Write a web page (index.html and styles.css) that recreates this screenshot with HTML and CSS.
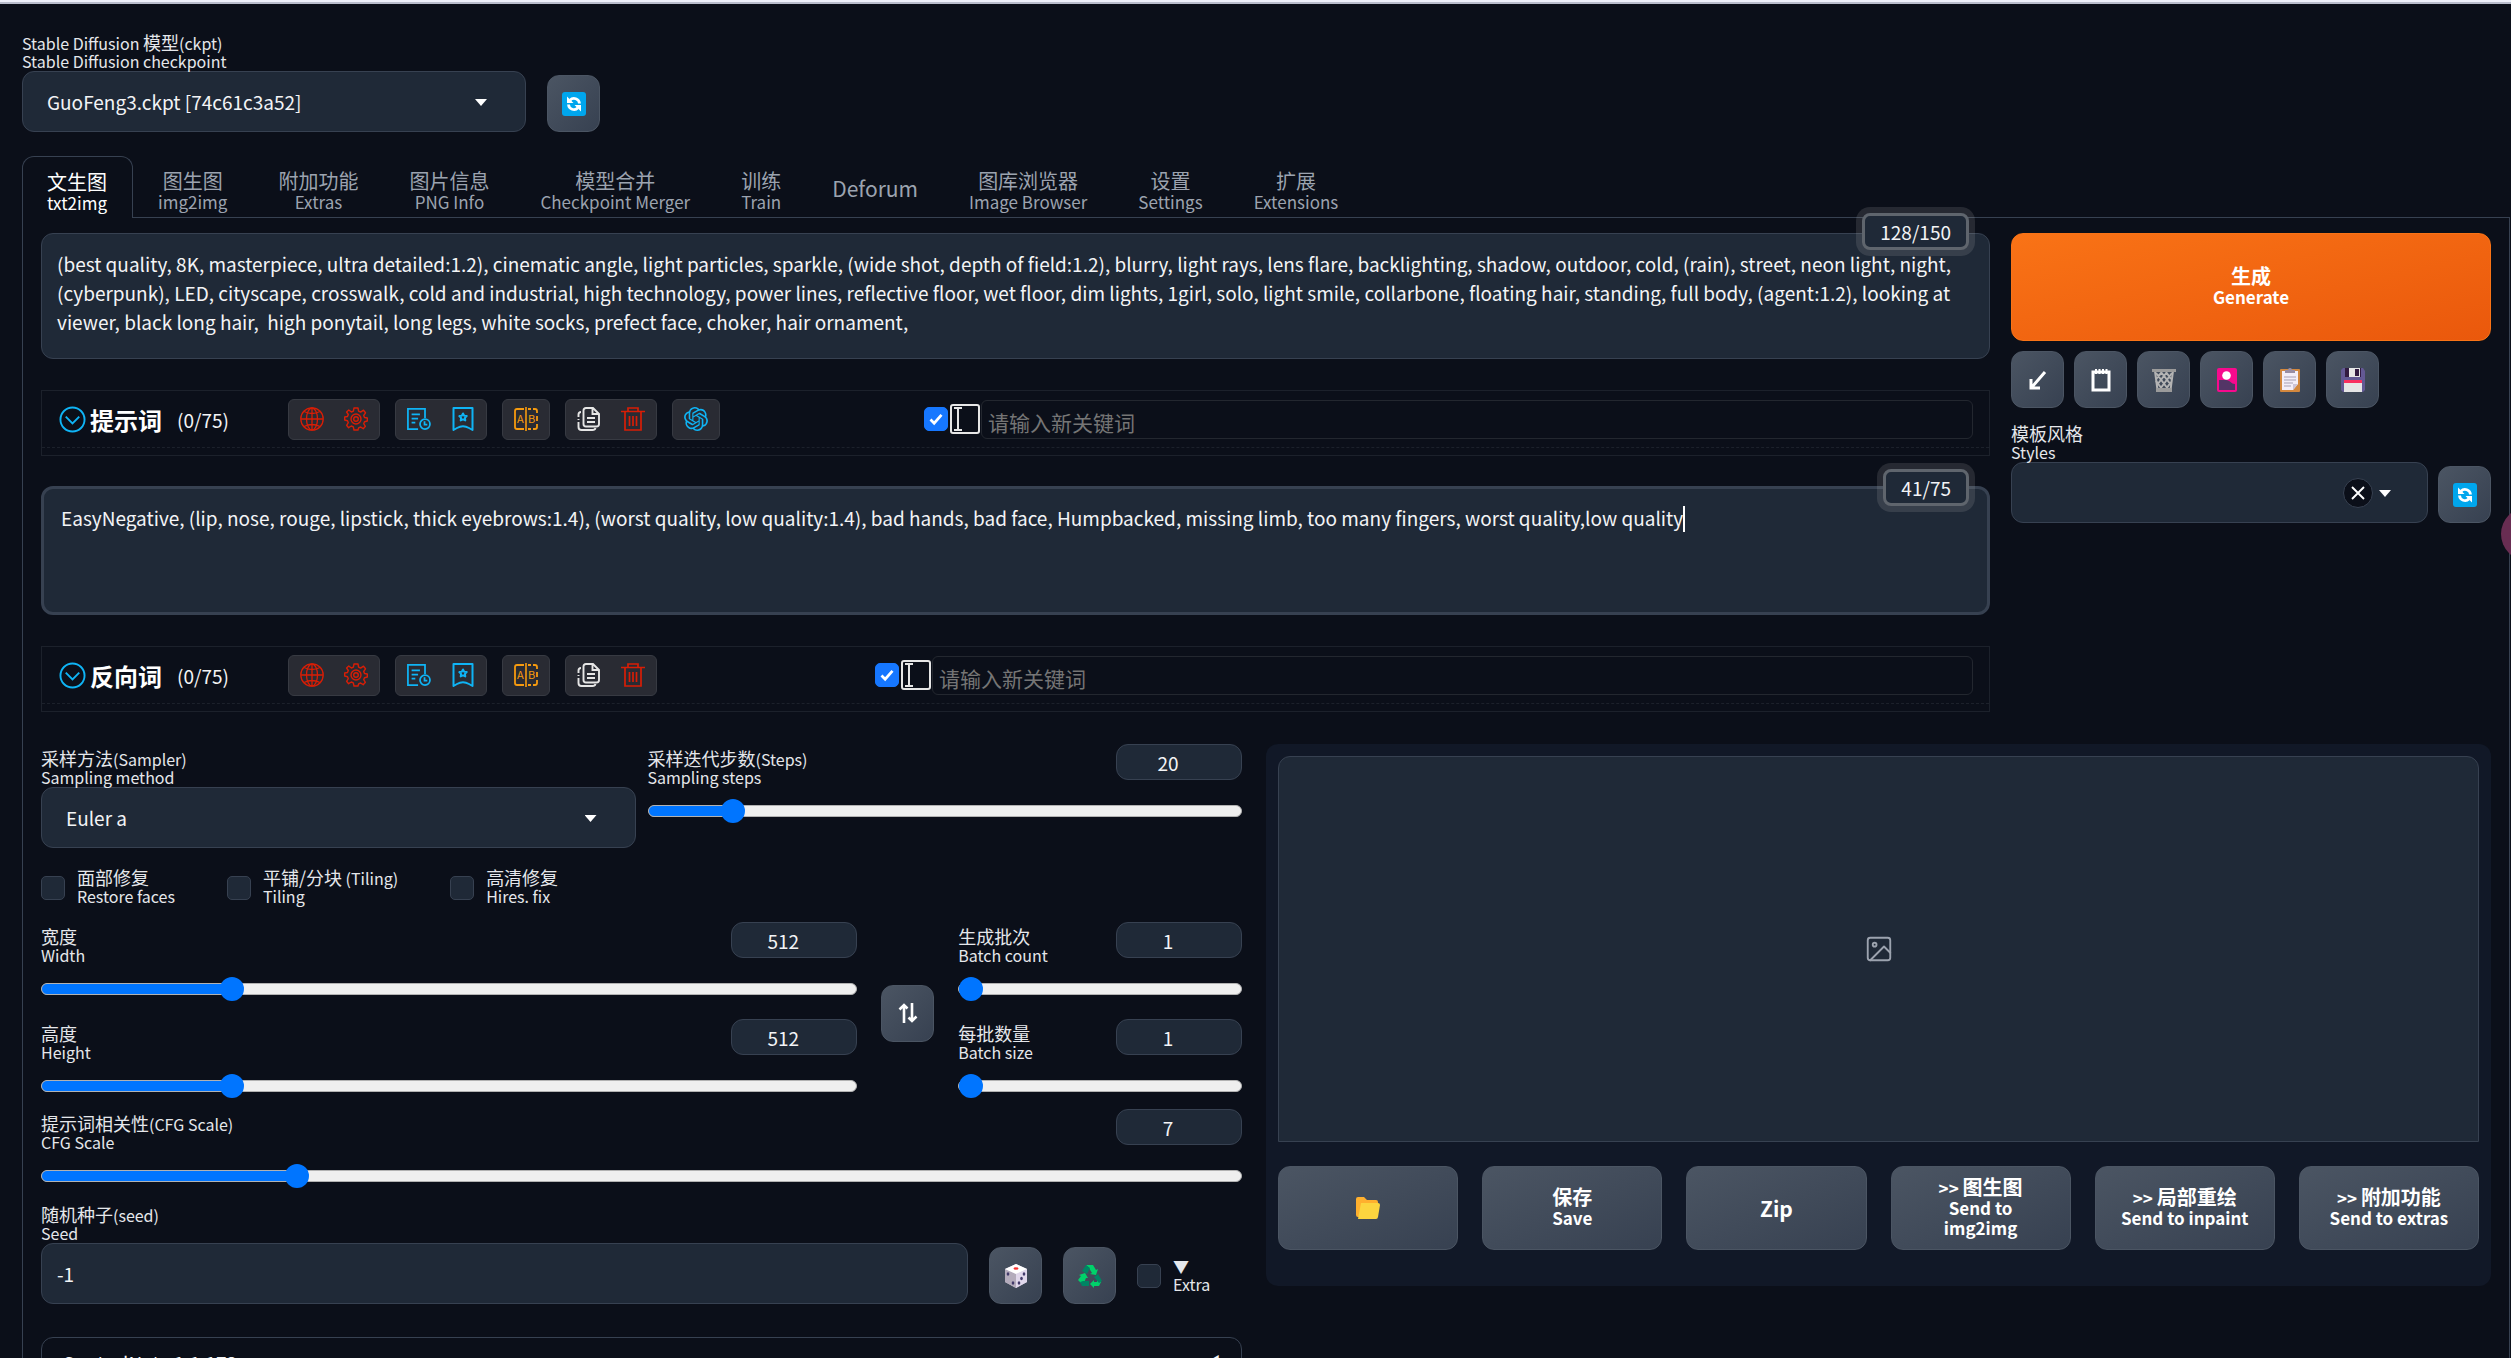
FILE: index.html
```html
<!DOCTYPE html>
<html lang="zh-CN">
<head>
<meta charset="utf-8">
<title>Stable Diffusion</title>
<link rel="stylesheet" href="styles.css">
</head>
<body>
<svg class="sprite" aria-hidden="true">
  <symbol id="i-refresh" viewBox="0 0 24 24"><rect width="24" height="24" rx="3" fill="#00a6ed"/><path d="M8 8.200a5.500 5.500 0 0 1 9.500 3.300M16 15.800a5.500 5.500 0 0 1-9.500-3.300" fill="none" stroke="#fff" stroke-width="2.800"/><path d="M5 4.500V11h6.500zM19 19.500V13h-6.500z" fill="#fff"/></symbol>
  <symbol id="i-arrow" viewBox="0 0 24 24"><path d="M19 4 6 19M5 11v9h9" fill="none" stroke="#fff" stroke-width="3"/></symbol>
  <symbol id="i-pad" viewBox="0 0 24 24"><path d="M4 4h16v18H4z" fill="none" stroke="#fff" stroke-width="3"/><path d="M7 1v5M10.500 1v5M14 1v5M17.500 1v5" stroke="#fff" stroke-width="2"/></symbol>
  <symbol id="i-bin" viewBox="0 0 24 24"><path d="M3 3l2.500 19h13L21 3z" fill="none" stroke="#b4b4b4" stroke-width="2"/><path d="M4 5l12 16M9 4l10 13M14 4l5 7M20 5 8 21M15 4 5 17M10 4 4 11M4 13l6 8M19 14l-5 7" stroke="#b4b4b4" stroke-width="2"/><path d="M0 1h24v3H0zM4 20h16v4H4z" fill="#9b9b9b"/></symbol>
  <symbol id="i-card" viewBox="0 0 24 24"><rect x="2" width="20" height="24" rx="2" fill="#f70a8d"/><rect x="4" y="2" width="16" height="20" fill="#533566"/><path d="M4 2h16v14c-4 0-5-4-9-4H4z" fill="#f70a8d"/><circle cx="11.500" cy="7.500" r="4.300" fill="#fff"/></symbol>
  <symbol id="i-clip" viewBox="0 0 24 24"><rect x="2" y="1" width="20" height="23" rx="1" fill="#d3883e"/><path d="M4 3h16v13l-5 6H4z" fill="#f3eef8"/><path d="M20 16h-5v6z" fill="#cdc4d6"/><path d="M6 9h12M6 12h12M6 15h9M6 18h7" stroke="#a79fb3" stroke-width="1"/><path d="M7 2h3a2 2 0 0 1 4 0h3v3H7z" fill="#998ea4"/></symbol>
  <symbol id="i-floppy" viewBox="0 0 24 24"><path d="M2 0h20l2 3v19l-2 2H2l-2-2V2z" fill="#635994"/><path d="M4 0h16v9H4z" fill="#321b41"/><path d="M8 0h11v9H8z" fill="#e6e6e6"/><path d="M14 1h4v7h-4z" fill="#321b41"/><path d="M3 12h18v12H3z" fill="#e6e6e6"/><path d="M3 12h18v3H3z" fill="#f92f60"/></symbol>
  <symbol id="i-folder" viewBox="0 0 24 24"><path d="M0 3q0-2 2-2h6l3 3h9q2 0 2 2v15H2q-2 0-2-2z" fill="#ffb02e"/><path d="M5 7h17q2 0 2 2l-2 12q-.3 2-2 2H2z" fill="#fcd53f"/></symbol>
  <symbol id="i-dice" viewBox="0 0 24 24"><path d="M12 0 1 5v13l11 6 11-6V5z" fill="#cdc4d6"/><path d="M12 10 1 5v13l11 6z" fill="#b4acbc"/><path d="M12 10 23 5v13l-11 6z" fill="#e1d8ec"/><path d="M12 0 1 5l11 5 11-5z" fill="#fff"/><ellipse cx="12" cy="4.500" rx="2.500" ry="1.200" fill="#f8312f"/><g fill="#433b6b"><ellipse cx="4" cy="10" rx="1.300" ry="1.700"/><ellipse cx="9" cy="19" rx="1.300" ry="1.700"/><ellipse cx="20" cy="10" rx="1.300" ry="1.700"/><ellipse cx="17.500" cy="14.500" rx="1.300" ry="1.700"/><ellipse cx="15" cy="19" rx="1.300" ry="1.700"/></g></symbol>
  <symbol id="i-recycle" viewBox="0 0 24 24"><path d="M8 1h7l3 5 2-1-2 6-6-1 2-1-3-5z" fill="#00d26a"/><path d="M8 1l4 3-3 6-5-3z" fill="#008463"/><path d="M1 11l6-2 3 5-2 0-3 7-5-5 3-4z" fill="#00d26a"/><path d="M5 17h6v5H4l-2-4z" fill="#008463"/><path d="M19 11l4 7-2 4h-5v2l-4-4 4-4v2h3z" fill="#00d26a"/><path d="M16 13l4-3 4 7-3 2z" fill="#008463"/></symbol>
  <symbol id="i-swap" viewBox="0 0 24 24"><path d="M8 22V4M3.500 8.500 8 4l3.500 3.500M16 2v18M12.500 16.500 16 20l4.500-4.500" fill="none" stroke="#fff" stroke-width="2.600"/></symbol>
  <symbol id="i-chev" viewBox="0 0 28 28"><g fill="none" stroke="#0fb4f5" stroke-width="2"><circle cx="14" cy="14" r="12.500"/><path d="m7 11 7 7 7-7"/></g></symbol>
  <symbol id="i-globe" viewBox="0 0 24 24"><g fill="none" stroke="#d81e06" stroke-width="1.300"><circle cx="12" cy="12" r="11.200"/><ellipse cx="12" cy="12" rx="5.500" ry="11"/><path d="M12 1v22M1 12h22M4 4.500q8 4 16 0M4 19.500q8-4 16 0"/></g></symbol>
  <symbol id="i-gear" viewBox="0 0 24 24"><g fill="none" stroke="#d81e06" stroke-width="1.400" stroke-linejoin="round"><path d="M10 1h4l.6 3.200 2 .9L19.500 3.200l2 2.600-1.800 2.700.8 2 2.800.5v3l-2.800.7-.8 2 1.700 2.600-2.200 2.400-2.600-1.700-2 .9L14 23h-4l-.7-3.100-2-.9-2.700 1.700-2-2.400L4.300 15.700l-.8-2L.7 13v-3l2.800-.5.8-2L2.600 5l2.200-2 2.600 2 2-.9z"/><circle cx="12" cy="12" r="5"/><circle cx="12" cy="12" r="2.300"/></g></symbol>
  <symbol id="i-history" viewBox="0 0 26 24"><g fill="none" stroke="#0fb4f5" stroke-width="1.900"><path d="M12 23H1V1h18.500v10M5 7h9M5 11.500h7M5 16h4"/><circle cx="19.500" cy="17.500" r="5.400"/><path d="M19 14.500V18h3"/></g></symbol>
  <symbol id="i-mark" viewBox="0 0 24 24"><g fill="none" stroke="#0fb4f5" stroke-width="2" stroke-linejoin="round"><path d="M2.500 1h19v22L18 21q-6-3.500-12 0l-3.500 2z"/><path d="m12 6.500 1.200 2.200 2.500.4-1.800 1.800.4 2.500L12 12.300l-2.300 1.100.4-2.500-1.800-1.800 2.500-.4z"/></g></symbol>
  <symbol id="i-ab" viewBox="0 0 24 24"><g fill="none" stroke="#f59a0f" stroke-width="1.800"><path d="M10 2H3Q1 2 1 4v16q0 2 2 2h7M14 2h3M19 2h2q2 0 2 2v2M23 9v5M23 17v3q0 2-2 2h-2M17 22h-3"/><path d="M12 0v24" stroke-width="1.600"/></g><text x="3" y="16" class="ab">A</text><text x="14" y="16" class="ab">B</text></symbol>
  <symbol id="i-copy" viewBox="0 0 24 24"><g fill="none" stroke="#e6e6e6" stroke-width="1.900"><path d="M9 1h7l6 6v10q0 2.500-2.500 2.500H9q-2.500 0-2.500-2.500V3.500Q6.500 1 9 1zM15.500 1v6h6M10 11h8M10 15h8"/><path d="M4 5Q1.500 5 1.500 7.500V10M1.500 12v1M1.500 15v5q0 3 3 3h11q2.500 0 3-2"/></g></symbol>
  <symbol id="i-trash" viewBox="0 0 24 24"><g fill="none" stroke="#d81e06" stroke-width="1.700"><path d="M0 4.500h24M7 4V1h10v3M4 5v18h16V5M8.500 9v10M12 9v10M15.500 9v10"/></g></symbol>
  <symbol id="i-gpt" viewBox="0 0 24 24"><path fill="#0fb4f5" d="M22.2819 9.8211a5.9847 5.9847 0 0 0-.5157-4.9108 6.0462 6.0462 0 0 0-6.5098-2.9A6.0651 6.0651 0 0 0 4.9807 4.1818a5.9847 5.9847 0 0 0-3.9977 2.9 6.0462 6.0462 0 0 0 .7427 7.0966 5.98 5.98 0 0 0 .511 4.9107 6.051 6.051 0 0 0 6.5146 2.9001A5.9847 5.9847 0 0 0 13.2599 24a6.0557 6.0557 0 0 0 5.7718-4.2058 5.9894 5.9894 0 0 0 3.9977-2.9001 6.0557 6.0557 0 0 0-.7475-7.0729zm-9.022 12.6081a4.4755 4.4755 0 0 1-2.8764-1.0408l.1419-.0804 4.7783-2.7582a.7948.7948 0 0 0 .3927-.6813v-6.7369l2.02 1.1686a.071.071 0 0 1 .038.0615v5.5826a4.504 4.504 0 0 1-4.4945 4.4944zm-9.6607-4.1254a4.4708 4.4708 0 0 1-.5346-3.0137l.142.0852 4.783 2.7582a.7712.7712 0 0 0 .7806 0l5.8428-3.3685v2.3324a.0804.0804 0 0 1-.0332.0615L9.74 19.9502a4.4992 4.4992 0 0 1-6.1408-1.6464zM2.3408 7.8956a4.485 4.485 0 0 1 2.3655-1.9728V11.6a.7664.7664 0 0 0 .3879.6765l5.8144 3.3543-2.0201 1.1685a.0757.0757 0 0 1-.071 0l-4.8303-2.7865A4.504 4.504 0 0 1 2.3408 7.872zm16.5963 3.8558L13.1038 8.364 15.1192 7.2a.0757.0757 0 0 1 .071 0l4.8303 2.7913a4.4944 4.4944 0 0 1-.6765 8.1042v-5.6772a.79.79 0 0 0-.407-.667zm2.0107-3.0231l-.142-.0852-4.7735-2.7818a.7759.7759 0 0 0-.7854 0L9.409 9.2297V6.8974a.0662.0662 0 0 1 .0284-.0615l4.8303-2.7866a4.4992 4.4992 0 0 1 6.6802 4.66zM8.3065 12.863l-2.02-1.1638a.0804.0804 0 0 1-.038-.0567V6.0742a4.4992 4.4992 0 0 1 7.3757-3.4537l-.142.0805L8.704 5.459a.7948.7948 0 0 0-.3927.6813zm1.0976-2.3654l2.602-1.4998 2.6069 1.4998v2.9994l-2.5974 1.4997-2.6067-1.4997Z"/></symbol>
  <symbol id="i-ibeam" viewBox="0 0 30 30"><rect x="1" y="1" width="28" height="28" rx="2" fill="none" stroke="#e6e6e6" stroke-width="2"/><path d="M4 4h8M4 26h8M8 4v22" stroke="#e6e6e6" stroke-width="2"/></symbol>
  <symbol id="i-image" viewBox="0 0 24 24"><g fill="none" stroke="#9ca3af" stroke-width="1.500" stroke-linecap="round" stroke-linejoin="round"><rect x="3" y="3" width="18" height="18" rx="2"/><circle cx="8.500" cy="8.500" r="1.500"/><path d="m21 15-5-5L5 21"/></g></symbol>
  <symbol id="i-x" viewBox="0 0 24 24"><path d="m4 4 16 16M20 4 4 20" stroke="#fff" stroke-width="2.500"/></symbol>
</svg>

<div class="window-edge"></div>
<div class="app">
  <header class="quick">
    <div class="field quick-model">
      <label class="label" for="ckpt">Stable Diffusion <span class="zh">模型</span>(ckpt)<br>Stable Diffusion checkpoint</label>
      <div class="select"><select id="ckpt"><option>GuoFeng3.ckpt [74c61c3a52]</option></select></div>
    </div>
    <button class="tool" aria-label="Refresh checkpoints"><svg><use href="#i-refresh"/></svg></button>
  </header>

  <nav class="tabs">
    <button class="tab tab-active"><span class="zh">文生图</span><br>txt2img</button>
    <button class="tab"><span class="zh">图生图</span><br>img2img</button>
    <button class="tab"><span class="zh">附加功能</span><br>Extras</button>
    <button class="tab"><span class="zh">图片信息</span><br>PNG Info</button>
    <button class="tab"><span class="zh">模型合并</span><br>Checkpoint Merger</button>
    <button class="tab"><span class="zh">训练</span><br>Train</button>
    <button class="tab tab-single">Deforum</button>
    <button class="tab"><span class="zh">图库浏览器</span><br>Image Browser</button>
    <button class="tab"><span class="zh">设置</span><br>Settings</button>
    <button class="tab"><span class="zh">扩展</span><br>Extensions</button>
  </nav>

  <main class="panel">
    <section class="top">
      <div class="prompts">
        <div class="prompt">
          <textarea class="prompt-text" aria-label="Prompt" spellcheck="false">(best quality, 8K, masterpiece, ultra detailed:1.2), cinematic angle, light particles, sparkle, (wide shot, depth of field:1.2), blurry, light rays, lens flare, backlighting, shadow, outdoor, cold, (rain), street, neon light, night, (cyberpunk), LED, cityscape, crosswalk, cold and industrial, high technology, power lines, reflective floor, wet floor, dim lights, 1girl, solo, light smile, collarbone, floating hair, standing, full body, (agent:1.2), looking at viewer, black long hair,  high ponytail, long legs, white socks, prefect face, choker, hair ornament,</textarea>
          <span class="tokens">128/150</span>
        </div>
        <div class="bar">
          <div class="bar-row">
            <div class="bar-head"><svg class="chev"><use href="#i-chev"/></svg><b>提示词</b><span>(0/75)</span></div>
            <div class="bar-tools">
              <div class="group"><button aria-label="Language"><svg><use href="#i-globe"/></svg></button><button aria-label="Settings"><svg><use href="#i-gear"/></svg></button></div>
              <div class="group"><button aria-label="History"><svg><use href="#i-history"/></svg></button><button aria-label="Favorites"><svg><use href="#i-mark"/></svg></button></div>
              <div class="group"><button aria-label="Translate"><svg><use href="#i-ab"/></svg></button></div>
              <div class="group"><button aria-label="Copy"><svg><use href="#i-copy"/></svg></button><button aria-label="Delete"><svg><use href="#i-trash"/></svg></button></div>
              <div class="group"><button aria-label="ChatGPT"><svg><use href="#i-gpt"/></svg></button></div>
            </div>
            <div class="keyword">
              <input class="check" type="checkbox" checked aria-label="Show input">
              <svg class="ibeam"><use href="#i-ibeam"/></svg>
              <input class="keyword-input" type="text" placeholder="请输入新关键词" aria-label="Keyword">
            </div>
          </div>
        </div>
        <div class="prompt prompt-focus">
          <textarea class="prompt-text" aria-label="Negative prompt" spellcheck="false">EasyNegative, (lip, nose, rouge, lipstick, thick eyebrows:1.4), (worst quality, low quality:1.4), bad hands, bad face, Humpbacked, missing limb, too many fingers, worst quality,low quality</textarea>
          <span class="tokens">41/75</span>
          <span class="caret"></span>
        </div>
        <div class="bar">
          <div class="bar-row">
            <div class="bar-head"><svg class="chev"><use href="#i-chev"/></svg><b>反向词</b><span>(0/75)</span></div>
            <div class="bar-tools">
              <div class="group"><button aria-label="Language"><svg><use href="#i-globe"/></svg></button><button aria-label="Settings"><svg><use href="#i-gear"/></svg></button></div>
              <div class="group"><button aria-label="History"><svg><use href="#i-history"/></svg></button><button aria-label="Favorites"><svg><use href="#i-mark"/></svg></button></div>
              <div class="group"><button aria-label="Translate"><svg><use href="#i-ab"/></svg></button></div>
              <div class="group"><button aria-label="Copy"><svg><use href="#i-copy"/></svg></button><button aria-label="Delete"><svg><use href="#i-trash"/></svg></button></div>
            </div>
            <div class="keyword keyword-wide">
              <input class="check" type="checkbox" checked aria-label="Show input">
              <svg class="ibeam"><use href="#i-ibeam"/></svg>
              <input class="keyword-input" type="text" placeholder="请输入新关键词" aria-label="Negative keyword">
            </div>
          </div>
        </div>
      </div>

      <aside class="actions">
        <button class="generate"><span class="zh">生成</span><br>Generate</button>
        <div class="tool-row">
          <button class="tool" aria-label="Read parameters"><svg><use href="#i-arrow"/></svg></button>
          <button class="tool" aria-label="Notepad"><svg><use href="#i-pad"/></svg></button>
          <button class="tool" aria-label="Clear prompt"><svg><use href="#i-bin"/></svg></button>
          <button class="tool" aria-label="Extra networks"><svg><use href="#i-card"/></svg></button>
          <button class="tool" aria-label="Apply styles"><svg><use href="#i-clip"/></svg></button>
          <button class="tool" aria-label="Save style"><svg><use href="#i-floppy"/></svg></button>
        </div>
        <div class="styles">
          <div class="field">
            <label class="label" for="styles"><span class="zh">模板风格</span><br>Styles</label>
            <div class="select select-near"><select id="styles"><option></option></select><button class="clear" aria-label="Clear styles"><svg><use href="#i-x"/></svg></button></div>
          </div>
          <button class="tool" aria-label="Refresh styles"><svg><use href="#i-refresh"/></svg></button>
        </div>
      </aside>
    </section>

    <section class="bottom">
      <div class="settings">
        <div class="sampler">
          <div class="field sampler-method">
            <label class="label" for="sampler"><span class="zh">采样方法</span>(Sampler)<br>Sampling method</label>
            <div class="select"><select id="sampler"><option>Euler a</option></select></div>
          </div>
          <div class="slider">
            <div class="slider-head"><label class="label" for="steps"><span class="zh">采样迭代步数</span>(Steps)<br>Sampling steps</label><input class="num" type="number" value="20" aria-label="Sampling steps value"></div>
            <input class="range" id="steps" type="range" min="1" max="150" value="20" style="--p:.1275">
          </div>
        </div>

        <div class="checks">
          <label class="tick"><input class="check" type="checkbox"><span class="label"><span class="zh">面部修复</span><br>Restore faces</span></label>
          <label class="tick"><input class="check" type="checkbox"><span class="label"><span class="zh">平铺/分块</span> (Tiling)<br>Tiling</span></label>
          <label class="tick"><input class="check" type="checkbox"><span class="label"><span class="zh">高清修复</span><br>Hires. fix</span></label>
        </div>

        <div class="size">
          <div class="size-col">
            <div class="slider">
              <div class="slider-head"><label class="label" for="width"><span class="zh">宽度</span><br>Width</label><input class="num" type="number" value="512" aria-label="Width value"></div>
              <input class="range" id="width" type="range" min="64" max="2048" value="512" style="--p:.2258">
            </div>
            <div class="slider">
              <div class="slider-head"><label class="label" for="height"><span class="zh">高度</span><br>Height</label><input class="num" type="number" value="512" aria-label="Height value"></div>
              <input class="range" id="height" type="range" min="64" max="2048" value="512" style="--p:.2258">
            </div>
          </div>
          <button class="tool swap" aria-label="Swap width and height"><svg><use href="#i-swap"/></svg></button>
          <div class="size-col">
            <div class="slider">
              <div class="slider-head"><label class="label" for="count"><span class="zh">生成批次</span><br>Batch count</label><input class="num" type="number" value="1" aria-label="Batch count value"></div>
              <input class="range" id="count" type="range" min="1" max="100" value="1" style="--p:0">
            </div>
            <div class="slider">
              <div class="slider-head"><label class="label" for="batch"><span class="zh">每批数量</span><br>Batch size</label><input class="num" type="number" value="1" aria-label="Batch size value"></div>
              <input class="range" id="batch" type="range" min="1" max="8" value="1" style="--p:0">
            </div>
          </div>
        </div>

        <div class="slider cfg">
          <div class="slider-head"><label class="label" for="cfg"><span class="zh">提示词相关性</span>(CFG Scale)<br>CFG Scale</label><input class="num" type="number" value="7" aria-label="CFG value"></div>
          <input class="range" id="cfg" type="range" min="1" max="30" value="7" style="--p:.2069">
        </div>

        <div class="seed">
          <div class="field">
            <label class="label" for="seed"><span class="zh">随机种子</span>(seed)<br>Seed</label>
            <input class="text" id="seed" type="text" value="-1">
          </div>
          <button class="tool" aria-label="Random seed"><svg><use href="#i-dice"/></svg></button>
          <button class="tool" aria-label="Reuse seed"><svg><use href="#i-recycle"/></svg></button>
          <label class="tick"><input class="check" type="checkbox"><span class="label">▼<br>Extra</span></label>
        </div>

        <button class="accordion"><span>ControlNet v1.1.173</span><span>◀</span></button>
      </div>

      <div class="output">
        <div class="gallery"><svg><use href="#i-image"/></svg></div>
        <div class="sends">
          <button class="send" aria-label="Open folder"><svg><use href="#i-folder"/></svg></button>
          <button class="send"><span><span class="zh">保存</span><br>Save</span></button>
          <button class="send send-single">Zip</button>
          <button class="send"><span>&gt;&gt; <span class="zh">图生图</span><br>Send to<br>img2img</span></button>
          <button class="send"><span>&gt;&gt; <span class="zh">局部重绘</span><br>Send to inpaint</span></button>
          <button class="send"><span>&gt;&gt; <span class="zh">附加功能</span><br>Send to extras</span></button>
        </div>
      </div>
    </section>
  </main>
  <span class="bubble"></span>
</div>
</body>
</html>
```
FILE: styles.css
```css
:root {
  --bg: #0b0f19;
  --box: #1f2937;
  --line: #374151;
  --line-light: #4b5563;
  --text: #f3f4f6;
  --muted: #9ca3af;
}
* { box-sizing: border-box; }
html { overflow: hidden; }
body {
  margin: 0;
  height: 100vh;
  overflow: hidden;
  background: var(--bg);
  color: var(--text);
  font: 19px/29px "Noto Sans CJK SC", "Noto Sans", sans-serif;
}
button, input, select, textarea { font: inherit; color: inherit; margin: 0; }
button { cursor: pointer; }
svg { display: block; }
.sprite { position: absolute; width: 0; height: 0; }
.ab { font-size: 11px; fill: #f59a0f; }
.window-edge { height: 4px; background: #eef0fa; border-bottom: 2px solid #b9bdcc; }
.app { position: relative; padding: 30px 1px 0 22px; }

/* Chinese names are set a step larger than the English beside them */
.zh { font-size: 20px; line-height: 16px; }
.label .zh { font-size: 18px; }
/* descenders of the second line stay above the box below */
.label { display: block; position: relative; z-index: 1; padding-bottom: 1px; font-size: 16px; line-height: 18px; color: #e5e7eb; white-space: nowrap; }
.field { flex: 1; min-width: 0; }
.select { position: relative; }
.select select, .text {
  display: block;
  width: 100%;
  height: 61px;
  padding: 0 24px;
  border: 1px solid var(--line);
  border-radius: 12px;
  background: var(--box);
  appearance: none;
  outline: none;
}
.text { padding: 0 15px; }
.select::after {
  content: "";
  position: absolute;
  right: 39px;
  top: 28px;
  width: 12px;
  height: 7px;
  background: #fff;
  clip-path: polygon(0 0, 100% 0, 50% 100%);
}
.select-near::after { right: 37px; }
.clear {
  position: absolute;
  right: 55px;
  top: 16px;
  width: 30px;
  height: 30px;
  padding: 5px;
  border: 1px solid var(--line);
  border-radius: 50%;
  background: var(--bg);
}
.clear svg { width: 18px; height: 18px; }

.tool {
  display: flex;
  flex: none;
  align-items: center;
  justify-content: center;
  width: 53px;
  height: 57px;
  padding: 0;
  border: 1px solid var(--line-light);
  border-radius: 12px;
  background: linear-gradient(to bottom right, #4b5563, #374151);
}
.tool svg { width: 24px; height: 24px; }

.quick { display: flex; align-items: flex-end; gap: 21px; }
.quick-model { flex: none; width: 504px; }

.tabs { display: flex; margin-top: 24px; }
.tab {
  height: 61px;
  padding: 10px 25px 0 24px;
  border: 1px solid transparent;
  border-bottom: 0;
  border-radius: 12px 12px 0 0;
  background: none;
  color: var(--muted);
  font-size: 17px;
  line-height: 20px;
  white-space: nowrap;
}
.tab-single { font-size: 21px; padding-top: 2px; }
.tab-active { position: relative; margin-bottom: -1px; border-color: var(--line); background: var(--bg); color: #fff; height: 62px; }

.panel { border: 1px solid var(--line); padding: 15px 18px 0; }
.top { display: grid; grid-template-columns: minmax(0, 1fr) 480px; gap: 21px; }
.prompt { position: relative; }
.prompt-text {
  display: block;
  width: 100%;
  height: 126px;
  padding: 15px 15px 0;
  border: 1px solid var(--line);
  border-radius: 12px;
  background: var(--box);
  outline: none;
  resize: none;
}
.prompt-focus .prompt-text { height: 129px; padding: 14px 17px 0; border: 3px solid var(--line); }
.tokens {
  position: absolute;
  right: 21px;
  top: -20px;
  padding: 1px 15px;
  border: 3px solid #5f656d;
  border-radius: 8px;
  background: var(--box);
  box-shadow: 0 0 0 6px rgba(192, 192, 192, .15);
}
.prompt-focus .tokens { top: -17px; }
.caret { position: absolute; left: 1642px; top: 20px; width: 2px; height: 26px; background: #fff; }

.bar { height: 66px; margin: 31px 0 30px; border: 1px solid #1c212b; }
.prompts > .bar:last-child { margin-bottom: 0; }
.bar-row { display: flex; align-items: center; height: 57px; padding: 0 16px 0 17px; border-bottom: 1px dashed #1c212b; }
.bar-head { display: flex; align-items: center; flex: none; width: 229px; }
.bar-head b { margin: 0 15px 0 4px; font-size: 24px; color: #fff; }
.chev { width: 27px; height: 27px; }
.bar-tools { display: flex; gap: 15px; }
.group { display: flex; gap: 20px; height: 41px; padding: 7px 11px; border: 1px solid #373a42; border-radius: 6px; background: #292b33; }
.group button { padding: 0; border: 0; background: none; }
.group svg { width: 24px; height: 24px; }
.keyword { display: flex; align-items: center; width: 1049px; margin-left: auto; }
.keyword-wide { width: 1098px; }
.ibeam { flex: none; width: 30px; height: 30px; margin: 0 1px 0 2px; }
.keyword-input { flex: 1; min-width: 0; height: 39px; padding: 5px 6px 0; border: 1px solid #23272f; border-radius: 6px; background: none; font-size: 21px; outline: none; }
.keyword-input::placeholder { color: #757575; }

.check {
  flex: none;
  width: 24px;
  height: 24px;
  border: 1px solid var(--line);
  border-radius: 5px;
  background: var(--box);
  appearance: none;
}
.check:checked {
  border-color: #1677ff;
  background: #1677ff url("data:image/svg+xml,%3Csvg xmlns='http://www.w3.org/2000/svg' viewBox='0 0 24 24'%3E%3Cpath d='M6 12.500l4 4 8-9' fill='none' stroke='white' stroke-width='3'/%3E%3C/svg%3E");
}

.generate {
  display: block;
  width: 100%;
  height: 108px;
  border: 1px solid #f97316;
  border-radius: 12px;
  background: linear-gradient(to bottom right, #f97316, #ea580c);
  color: #fff;
  font-size: 17px;
  font-weight: 700;
  line-height: 20px;
}
.tool-row { display: flex; gap: 10px; margin: 10px 0 17px; }
.styles { display: flex; align-items: flex-end; gap: 10px; }

.bottom { display: grid; grid-template-columns: minmax(0, 1201fr) minmax(0, 1225fr); gap: 24px; align-items: start; margin-top: 32px; }
.sampler { display: grid; grid-template-columns: 1fr 1fr; gap: 12px; }
.sampler-method { padding-top: 6px; }
.slider-head { display: flex; justify-content: space-between; height: 43px; }
.slider-head .label { align-self: flex-end; }
.num {
  width: 126px;
  height: 36px;
  padding: 0 22px 0 0;
  border: 1px solid var(--line);
  border-radius: 12px;
  background: var(--box);
  text-align: center;
  appearance: textfield;
  outline: none;
}
.num::-webkit-inner-spin-button { display: none; }
.range { --at: calc(12px + (100% - 24px) * var(--p)); display: block; width: 100%; height: 24px; margin: 12px 0 0; background: none; appearance: none; }
.range::-webkit-slider-runnable-track {
  height: 12px;
  border: 1px solid #b2b2b2;
  border-radius: 6px;
  background: linear-gradient(#0075ff, #0075ff) 0 0 / var(--at) 100% no-repeat border-box, #efefef;
}
.range::-webkit-slider-thumb { width: 24px; height: 24px; margin-top: -7px; border-radius: 50%; background: #0075ff; appearance: none; }

.checks { display: flex; gap: 52px; margin-top: 21px; }
.tick { display: flex; align-items: center; gap: 12px; }
.size { display: grid; grid-template-columns: minmax(0, 817fr) 53px minmax(0, 284fr); align-items: center; column-gap: 24px; margin-top: 16px; }
.size-col { display: grid; gap: 18px; }
.swap { margin-top: 6px; }
.cfg { margin-top: 11px; }
.seed { display: flex; align-items: flex-end; gap: 21px; margin-top: 18px; }
.seed .tick { width: 105px; margin-bottom: 10px; }
.accordion { display: flex; justify-content: space-between; width: 100%; margin-top: 33px; padding: 10px 20px; border: 1px solid var(--line); border-radius: 12px; background: none; }

.output { padding: 12px 12px 36px; border-radius: 12px; background: #111827; }
.gallery { display: flex; align-items: center; justify-content: center; height: 386px; border: 1px solid var(--line); border-radius: 12px 12px 0 0; background: var(--box); }
.gallery svg { width: 30px; height: 30px; }
.sends { display: grid; grid-template-columns: repeat(6, minmax(0, 1fr)); gap: 24px; margin-top: 24px; }
.send {
  display: flex;
  align-items: center;
  justify-content: center;
  height: 84px;
  padding: 0;
  border: 1px solid var(--line-light);
  border-radius: 12px;
  background: linear-gradient(to bottom right, #4b5563, #374151);
  color: #fff;
  font-size: 17px;
  font-weight: 700;
  line-height: 20px;
}
.send-single { font-size: 21px; }
.send svg { width: 24px; height: 24px; }
.bubble { position: absolute; right: -44px; top: 503px; width: 54px; height: 54px; border-radius: 50%; background: #682d52; }
```
